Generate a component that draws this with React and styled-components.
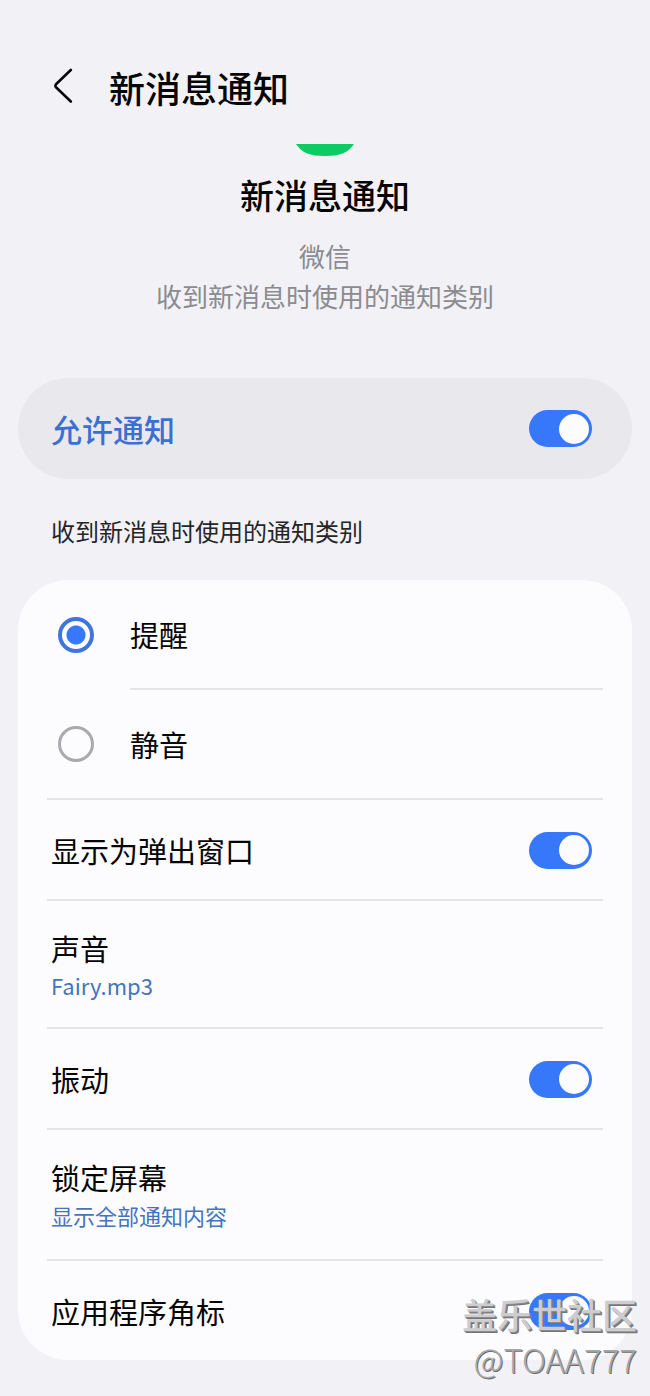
import { useState } from "react";
import styled, { createGlobalStyle } from "styled-components";

const GlobalStyle = createGlobalStyle`
* {
    box-sizing: border-box;
}
body {
    margin: 0;
    background: #f1f1f6;
    color: #050505;
    font-family: "Noto Sans CJK SC", sans-serif;
}
h1, h2, p {
    margin: 0;
}
`;

const Page = styled.div`
position: relative;
padding-bottom: 36px;
overflow: hidden;
`;
const Header = styled.header`
display: flex;
align-items: center;
height: 144px;
padding: 30px 48px 0;
gap: 31px;
`;
const BackBtn = styled.button`
display: flex;
width: 30px;
height: 40px;
padding: 0;
border: 0;
background: none;
cursor: pointer;
`;
const HeaderTitle = styled.h1`
font-size: 36px;
line-height: 40px;
font-weight: 500;
`;
const Intro = styled.section`
display: flex;
flex-direction: column;
align-items: center;
text-align: center;
`;
const IntroTitle = styled.h2`
margin: 15px 0 17px;
font-size: 34px;
line-height: 48px;
font-weight: 500;
`;
const IntroText = styled.p`
font-size: 26px;
line-height: 40px;
color: #8b8b90;
`;
const MainSwitch = styled.label`
display: flex;
align-items: center;
justify-content: space-between;
margin: 62px 18px 0;
height: 101px;
padding: 0 40px 0 33px;
border-radius: 51px;
background: #e9e9ed;
color: #3b6fd4;
font-size: 31px;
font-weight: 500;
cursor: pointer;
`;
const Caption = styled.p`
margin: 32px 51px 29px;
font-size: 24px;
line-height: 40px;
color: #252528;
`;
const Card = styled.main`
margin: 0 18px;
padding: 0 29px;
border-radius: 50px;
background: #fcfcff;
`;
const Row = styled.div`
display: flex;
align-items: center;
justify-content: space-between;
padding: ${props => props.$tall ? "27px 11px 25px 4px" : "30px 11px 29px 4px"};
border-bottom: ${props => props.$last ? "0" : "2px solid #e3e3e8"};
font-size: 29px;
line-height: 40px;
`;
const RadioRow = styled.label`
display: flex;
align-items: center;
gap: 36px;
padding-left: 11px;
cursor: pointer;
`;
const RadioText = styled.span`
box-sizing: content-box;
display: flex;
align-items: center;
flex: 1;
height: 108px;
border-bottom: ${props => props.$line ? "2px solid #e3e3e8" : "0"};
font-size: 29px;
line-height: 40px;
`;
const RadioGroup = styled.div`
border-bottom: 2px solid #e3e3e8;
`;
const Radio = styled.input`
appearance: none;
width: 36px;
height: 36px;
margin: 0;
border: 3px solid #a9a9ae;
border-radius: 50%;
cursor: pointer;
&:checked {
    border: 4px solid #4075e0;
    background: radial-gradient(circle, #3778ff 9px, transparent 10px);
}
`;
const Switch = styled.input`
appearance: none;
flex-shrink: 0;
display: flex;
align-items: center;
width: 63px;
height: 37px;
margin: 0;
padding: 0 3px;
border-radius: 19px;
background: #a9a9ae;
cursor: pointer;
&::before {
    content: "";
    width: 30px;
    height: 30px;
    border-radius: 50%;
    background: #fcfcff;
}
&:checked {
    justify-content: flex-end;
    background: #3778fb;
}
`;
const LinkRow = styled.button`
display: block;
width: 100%;
padding: 0;
border: 0;
background: none;
color: inherit;
font: inherit;
text-align: left;
cursor: pointer;
`;
const Value = styled.span`
display: block;
font-size: 22px;
line-height: ${props => props.$latin ? "34px" : "37px"};
color: #4474bd;
`;
const Watermark = styled.div`
position: absolute;
right: 13px;
bottom: 14px;
text-align: right;
pointer-events: none;
`;
const MarkName = styled.p`
font-size: 35px;
line-height: 44px;
font-weight: 500;
color: #cdcdd0;
text-shadow: 1px 1px 0 #8a8a8c, 2px 2px 0 #747476;
`;
const MarkUser = styled.p`
font-size: 33px;
line-height: 46px;
font-weight: 300;
color: #a8a8aa;
text-shadow: 1px 1px 0 #6c6c6e;
`;

export default function NotificationCategory() {
const [allow, setAllow] = useState(true);
const [mode, setMode] = useState("alert");
const [options, setOptions] = useState({ popup: true, vibrate: true, badge: true });

const toggle = (e) => {
    setOptions({ ...options, [e.target.id]: e.target.checked });
}
const changeMode = (e) => {
    setMode(e.target.value);
}
return (
    <Page>
        <GlobalStyle />
        <Header>
            <BackBtn type="button" aria-label="返回">
                <svg width="30" height="36" viewBox="0 0 30 36" fill="none" stroke="#0a0a0a" strokeWidth="2.6" strokeLinecap="round" strokeLinejoin="round">
                    <path d="M22.8 3 L8 17.3 Q6.8 18.8 8 20.3 L22.8 34.5" />
                </svg>
            </BackBtn>
            <HeaderTitle>新消息通知</HeaderTitle>
        </Header>
        <Intro>
            {/* bottom edge of the app icon, the rest is scrolled under the header */}
            <svg width="60" height="12" viewBox="0 0 60 12">
                <path d="M1 0 H59 C53 9 45 12 30 12 C15 12 7 9 1 0 Z" fill="#0bcb62" />
            </svg>
            <IntroTitle>新消息通知</IntroTitle>
            <IntroText>微信</IntroText>
            <IntroText>收到新消息时使用的通知类别</IntroText>
        </Intro>
        <MainSwitch htmlFor="allow">
            允许通知
            <Switch type="checkbox" id="allow" checked={allow} onChange={(e) => setAllow(e.target.checked)} />
        </MainSwitch>
        <Caption>收到新消息时使用的通知类别</Caption>
        <Card>
            <RadioGroup>
                <RadioRow>
                    <Radio type="radio" name="mode" value="alert" checked={mode === "alert"} onChange={changeMode} />
                    <RadioText $line>提醒</RadioText>
                </RadioRow>
                <RadioRow>
                    <Radio type="radio" name="mode" value="silent" checked={mode === "silent"} onChange={changeMode} />
                    <RadioText>静音</RadioText>
                </RadioRow>
            </RadioGroup>
            <Row>
                <label htmlFor="popup">显示为弹出窗口</label>
                <Switch type="checkbox" id="popup" checked={options.popup} onChange={toggle} />
            </Row>
            <Row $tall>
                <LinkRow type="button">
                    声音
                    <Value $latin>Fairy.mp3</Value>
                </LinkRow>
            </Row>
            <Row>
                <label htmlFor="vibrate">振动</label>
                <Switch type="checkbox" id="vibrate" checked={options.vibrate} onChange={toggle} />
            </Row>
            <Row $tall>
                <LinkRow type="button">
                    锁定屏幕
                    <Value>显示全部通知内容</Value>
                </LinkRow>
            </Row>
            <Row $last>
                <label htmlFor="badge">应用程序角标</label>
                <Switch type="checkbox" id="badge" checked={options.badge} onChange={toggle} />
            </Row>
        </Card>
        <Watermark>
            <MarkName>盖乐世社区</MarkName>
            <MarkUser>@TOAA777</MarkUser>
        </Watermark>
    </Page>
);
}
